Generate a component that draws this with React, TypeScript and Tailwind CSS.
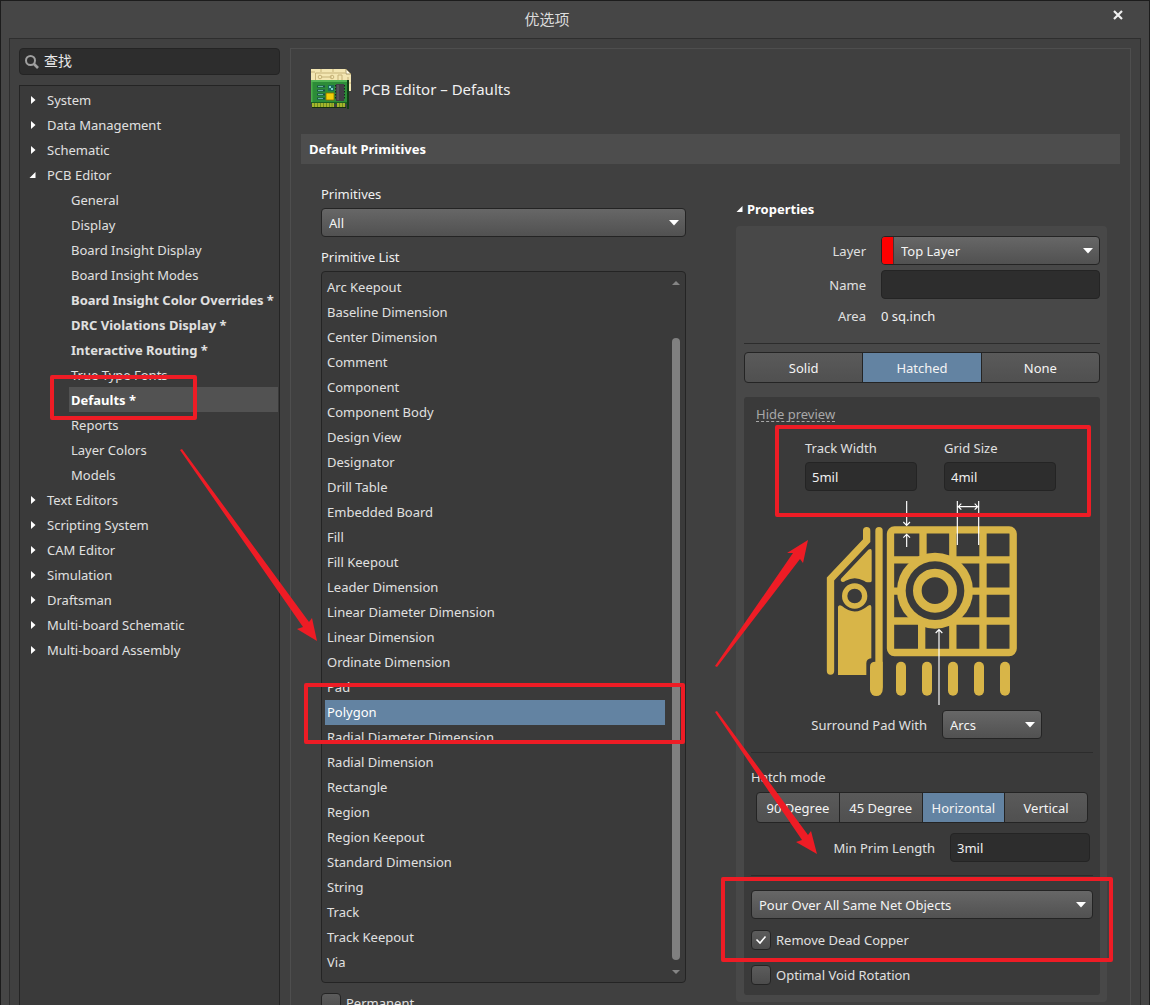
import React from "react";

const TREE = [
  { label: "System" },
  { label: "Data Management" },
  { label: "Schematic" },
  {
    label: "PCB Editor",
    children: [
      { label: "General" },
      { label: "Display" },
      { label: "Board Insight Display" },
      { label: "Board Insight Modes" },
      { label: "Board Insight Color Overrides *", bold: true },
      { label: "DRC Violations Display *", bold: true },
      { label: "Interactive Routing *", bold: true },
      { label: "True Type Fonts" },
      { label: "Defaults *", bold: true, selected: true },
      { label: "Reports" },
      { label: "Layer Colors" },
      { label: "Models" },
    ] as { label: string; bold?: boolean; selected?: boolean }[],
  },
  { label: "Text Editors" },
  { label: "Scripting System" },
  { label: "CAM Editor" },
  { label: "Simulation" },
  { label: "Draftsman" },
  { label: "Multi-board Schematic" },
  { label: "Multi-board Assembly" },
];

const PRIMITIVES = [
  "Arc Keepout",
  "Baseline Dimension",
  "Center Dimension",
  "Comment",
  "Component",
  "Component Body",
  "Design View",
  "Designator",
  "Drill Table",
  "Embedded Board",
  "Fill",
  "Fill Keepout",
  "Leader Dimension",
  "Linear Diameter Dimension",
  "Linear Dimension",
  "Ordinate Dimension",
  "Pad",
  "Polygon",
  "Radial Diameter Dimension",
  "Radial Dimension",
  "Rectangle",
  "Region",
  "Region Keepout",
  "Standard Dimension",
  "String",
  "Track",
  "Track Keepout",
  "Via",
];

const INPUT =
  "h-[29px] w-full min-w-0 rounded-[4px] border border-[#242424] bg-[#2d2d2d] px-1.5 text-[#f0f0f0] outline-none";

function Caret({ open = false }: { open?: boolean }) {
  return open ? (
    <svg className="h-2 w-2 shrink-0" viewBox="0 0 8 8" fill="#fff" aria-hidden="true">
      <path d="M6.500 1V7H0.500z" />
    </svg>
  ) : (
    <svg className="h-2 w-2 shrink-0" viewBox="0 0 8 8" fill="#fff" aria-hidden="true">
      <path d="M2 0V8L6.500 4z" />
    </svg>
  );
}

function Select({
  id,
  label,
  options,
  swatch = false,
}: {
  id: string;
  label?: string;
  options: string[];
  swatch?: boolean;
}) {
  return (
    <div className="relative flex h-[29px] w-full overflow-hidden rounded-[4px] border border-[#242424] bg-linear-to-b from-[#676767] to-[#515151]">
      {swatch && <span className="w-3 shrink-0 border-r border-[#4a3030] bg-[#ff0000]" />}
      <select
        id={id}
        aria-label={label}
        className="h-full w-full appearance-none bg-transparent pl-[7px] pr-6 text-[#f4f4f4] outline-none"
      >
        {options.map((o) => (
          <option key={o}>{o}</option>
        ))}
      </select>
      <svg
        className="pointer-events-none absolute right-1.5 top-[11px] h-[6px] w-[10px]"
        viewBox="0 0 10 6"
        fill="#fff"
        aria-hidden="true"
      >
        <path d="M0 0H10L5 5.5z" />
      </svg>
    </div>
  );
}

function Segments({ items, active }: { items: string[]; active: string }) {
  return (
    <div className="flex h-[31px] overflow-hidden rounded-[4px] border border-[#242424] bg-linear-to-b from-[#5a5a5a] to-[#505050]">
      {items.map((t) => (
        <button
          key={t}
          type="button"
          aria-pressed={t === active}
          className={
            t === active
              ? "min-w-0 flex-1 whitespace-nowrap border-r border-[#242424] bg-[#6383a2] text-[#f4f4f4] last:border-r-0"
              : "min-w-0 flex-1 whitespace-nowrap border-r border-[#242424] text-[#f4f4f4] last:border-r-0"
          }
        >
          {t}
        </button>
      ))}
    </div>
  );
}

function Check({ label, checked = false }: { label: string; checked?: boolean }) {
  return (
    <label className="flex h-5 items-center gap-[5px] text-[#e0e0e0]">
      <span className="relative h-5 w-5 shrink-0">
        <input
          type="checkbox"
          defaultChecked={checked}
          className="peer block h-5 w-5 appearance-none rounded-[4px] border border-[#242424] bg-linear-to-b from-[#5c5c5c] to-[#4c4c4c]"
        />
        <svg
          className="pointer-events-none absolute left-1 top-1 hidden h-3 w-3 peer-checked:block"
          viewBox="0 0 12 12"
          fill="none"
          stroke="#fff"
          strokeWidth="1.6"
          aria-hidden="true"
        >
          <path d="M1.5 5.5L5 9L10.500 2.500" />
        </svg>
      </span>
      {label}
    </label>
  );
}

function BoardIcon() {
  return (
    <svg className="h-10 w-10 shrink-0" viewBox="0 0 40 40" aria-hidden="true">
      <path d="M0 0H35L40 5V22H0z" fill="#f3e6b2" />
      <path d="M35 0V5H40z" fill="#fffbe6" stroke="#8a7a48" strokeWidth="0.7" />
      <g fill="none" stroke="#c5b278" strokeWidth="1">
        <path d="M4.500 12V4H34M0 3H4M10 0V3M22 0V3M10 8H21M37 8V22M37 14H40" />
        <circle cx="9" cy="8" r="1.800" />
        <circle cx="21" cy="8" r="1.800" />
        <path d="M27 11V6H31V11" />
      </g>
      <path d="M0 11H37V34H0z" fill="#2c8c38" />
      <path d="M0 11H37V13H0z" fill="#55b556" />
      <path d="M0 13H1.500V34H0z" fill="#4caf4a" />
      <path d="M36 11H38V40H36z" fill="#123d17" />
      <path d="M0 33H36V35H0z" fill="#1b5f23" />
      <path d="M1 34H23V39H1zM26 34H34V39H26z" fill="#a4b52c" />
      <path
        d="M3.500 34V39M6.500 34V39M9.500 34V39M12.500 34V39M15.500 34V39M18.500 34V39M21 34V39M28.500 34V39M31.500 34V39"
        stroke="#6f8a20"
      />
      <path d="M1 38.500H35" stroke="#15300f" />
      <path d="M6 17.500H14M6 21.500H14M6 25.500H14M6 29.500H14" stroke="#1a5148" strokeWidth="2" />
      <path d="M7 17.500H12M7 21.500H12M7 25.500H12M7 29.500H12" stroke="#6cbcab" strokeWidth="0.900" />
      <path d="M17 16H23V22H17z" fill="#1c6a58" />
      <path d="M18 17H20V19H18zM20 19H22V21H20z" fill="#7ad4c8" />
      <path d="M15 24H23V31H15z" fill="#f2cf08" stroke="#8d6d00" strokeWidth="0.800" />
      <path d="M25 15H33V32H25z" fill="#413e46" />
      <path d="M24.500 16V31M33.500 16V31" stroke="#1c1c20" strokeDasharray="1.500 1.500" />
      <path d="M26 16H28V31H26z" fill="#55525c" />
    </svg>
  );
}

function HatchPreview() {
  return (
    <svg
      className="mx-auto block h-[206px] w-[195px]"
      viewBox="75 30 585 618"
      role="img"
      aria-label="Hatched polygon preview"
    >
      <g fill="none" stroke="#d8b548" strokeWidth="22" strokeLinecap="round" strokeLinejoin="miter">
        <path d="M200 122V152L91.500 267V543" />
        <path d="M237 122V590" />
        <rect x="271.500" y="119.500" width="368" height="368" rx="12" />
        <path
          strokeLinecap="butt"
          d="M369 119V230M458.500 119V488M549 119V488M365 380V488M271 209.500H640M271 303.500H640M271 393H640"
        />
      </g>
      <circle cx="405" cy="302" r="114" fill="#d8b548" />
      <circle cx="405" cy="302" r="88" fill="#3a3a3a" />
      <circle cx="405" cy="302" r="53" fill="none" stroke="#d8b548" strokeWidth="26" />
      <circle cx="164" cy="318" r="30" fill="none" stroke="#d8b548" strokeWidth="16" />
      <g fill="#d8b548">
        <path d="M205 179Q215 174 215 182V272Q215 277 209 277H203Q198 277 192 272Q164 257 137 272Q128 279 123 273Q120 269 127 262z" />
        <path d="M114 350Q117 342 126 348Q164 381 204 347Q214 342 214 351V505Q199 507 199 520V555H114z" />
        <path d="M210 530Q210 515 226 515H248V599A19 19 0 0 1 210 599z" />
        <rect x="288" y="515" width="30" height="102" rx="15" />
        <rect x="366" y="515" width="30" height="102" rx="15" />
        <rect x="444" y="515" width="30" height="102" rx="15" />
        <rect x="522" y="515" width="30" height="102" rx="15" />
        <rect x="600" y="515" width="30" height="102" rx="15" />
      </g>
      <g fill="none" stroke="#fff" strokeWidth="3.500">
        <path d="M320 33V106M310 96L320 106L330 96" />
        <path d="M320 171V133M310 143L320 133L330 143" />
        <path d="M472 33V165M536 33V165M475 50H533M484 41L475 50L484 59M524 41L533 50L524 59" />
        <path d="M417 645V419M407 429L417 419L427 429" />
      </g>
    </svg>
  );
}

function Annotations() {
  return (
    <svg
      className="pointer-events-none absolute -left-px -top-px h-[1005px] w-[1150px]"
      viewBox="0 0 1150 1005"
      aria-hidden="true"
    >
      <g fill="none" stroke="#ee1c25" strokeWidth="4" strokeLinejoin="round">
        <rect x="52" y="377" width="143" height="41" />
        <rect x="306" y="685" width="377" height="57" />
        <rect x="777" y="427" width="312" height="88" />
        <rect x="723" y="879" width="388" height="81" />
      </g>
      <g fill="#ee1c25">
        <path d="M180 450L182 449L309 622L312 618L317 641L297 629L303 627z" />
        <path d="M715 666L717 667L800 559L803 563L808 540L787 553L793 553z" />
        <path d="M715 712L717 711L808 835L811 831L817 854L796 842L802 840z" />
      </g>
    </svg>
  );
}

export default function App() {
  return (
    <div className="relative flex h-screen flex-col overflow-hidden border border-b-0 border-[#1c1c1c] bg-[#464646] px-2 font-['Noto_Sans','Noto_Sans_CJK_SC',sans-serif] text-[13px] leading-5 text-[#e0e0e0]">
      <header className="relative flex h-[37px] shrink-0 items-center justify-center pb-0.5 pr-14">
        <h1 className="text-[15px] text-[#dcdcdc]">优选项</h1>
        <button type="button" aria-label="Close" className="absolute right-[15px] top-1.5 p-0.5">
          <svg className="h-3 w-3" viewBox="0 0 12 12" stroke="#f0f0f0" strokeWidth="2.200" aria-hidden="true">
            <path d="M2 2L10 10M10 2L2 10" />
          </svg>
        </button>
      </header>

      <div className="flex min-h-0 flex-1 gap-2.5 overflow-hidden border border-b-0 border-[#2e2e2e] bg-[#404040] px-[9px] pt-[9px]">
        <aside className="flex w-[261px] shrink-0 flex-col gap-2.5">
          <label className="flex h-[27px] shrink-0 items-center gap-[5px] rounded-[4px] border border-[#242424] bg-[#2d2d2d] px-[5px]">
            <svg className="h-[14px] w-[14px] shrink-0" viewBox="0 0 14 14" fill="none" stroke="#a0a0a0" strokeWidth="2" aria-hidden="true">
              <circle cx="5.500" cy="5.500" r="4.500" />
              <path d="M9 9L13 13" strokeWidth="2.600" />
            </svg>
            <input
              aria-label="查找"
              placeholder="查找"
              className="w-full min-w-0 bg-transparent pb-0.5 text-[14px] text-[#e8e8e8] outline-none placeholder:text-[#e8e8e8]"
            />
          </label>

          <nav className="min-h-0 flex-1 overflow-hidden border border-b-0 border-[#242424] bg-[#3a3a3a] pr-px pt-px">
            <ul>
              {TREE.map((node) => (
                <li key={node.label}>
                  <button type="button" aria-expanded={!!node.children} className="flex h-[25px] w-full items-center gap-[10px] pl-[9px] text-left">
                    <Caret open={!!node.children} />
                    {node.label}
                  </button>
                  {node.children && (
                    <ul className="pl-[49px]">
                      {node.children.map((c) => (
                        <li key={c.label}>
                          <button
                            type="button"
                            className={
                              c.selected
                                ? "block h-[25px] w-full overflow-hidden whitespace-nowrap bg-[#525252] pl-0.5 text-left font-bold text-white"
                                : c.bold
                                  ? "block h-[25px] w-full overflow-hidden whitespace-nowrap pl-0.5 text-left font-bold"
                                  : "block h-[25px] w-full overflow-hidden whitespace-nowrap pl-0.5 text-left"
                            }
                          >
                            {c.label}
                          </button>
                        </li>
                      ))}
                    </ul>
                  )}
                </li>
              ))}
            </ul>
          </nav>
        </aside>

        <main className="min-w-0 flex-1 overflow-hidden border border-b-0 border-[#4e4e4e] px-2.5 pt-5">
          <div className="flex items-center gap-[11px] pl-2.5">
            <BoardIcon />
            <h2 className="text-[15px] text-[#f0f0f0]">PCB Editor – Defaults</h2>
          </div>

          <h3 className="mt-[25px] flex h-[30px] items-center bg-[#4d4d4d] px-2 font-bold text-white">Default Primitives</h3>

          <div className="grid grid-cols-[365fr_371fr] items-start gap-[50px] pl-5 pr-[13px]">
            <section className="flex min-w-0 flex-col pt-5">
              <label htmlFor="primitives" className="mb-1 text-[#f0f0f0]">
                Primitives
              </label>
              <Select id="primitives" options={["All"]} />
              <h4 className="mb-1 mt-2.5 text-[#f0f0f0]">Primitive List</h4>
              <div className="flex rounded-[4px] border border-[#242424] bg-[#3a3a3a] py-[3px] pl-[3px] pr-[5px]">
                <ul role="listbox" aria-label="Primitive List" className="min-w-0 flex-1 pb-1 pr-[7px]">
                  {PRIMITIVES.map((p) => (
                    <li
                      key={p}
                      role="option"
                      aria-selected={p === "Polygon"}
                      className={
                        p === "Polygon"
                          ? "flex h-[25px] items-center bg-[#6383a2] px-0.5 pb-0.5 text-white"
                          : "flex h-[25px] items-center px-0.5 pb-0.5"
                      }
                    >
                      {p}
                    </li>
                  ))}
                </ul>
                <div className="flex w-2 flex-col items-center pb-[5px] pt-1.5" aria-hidden="true">
                  <svg className="h-1 w-2 shrink-0" viewBox="0 0 8 4" fill="#858585">
                    <path d="M0 4H8L4 0z" />
                  </svg>
                  <span className="mb-2.5 mt-[53px] w-2 flex-1 rounded-full bg-[#808080]" />
                  <svg className="h-1 w-2 shrink-0" viewBox="0 0 8 4" fill="#858585">
                    <path d="M0 0H8L4 4z" />
                  </svg>
                </div>
              </div>
              <div className="mt-2.5">
                <Check label="Permanent" />
              </div>
            </section>

            <section className="min-w-0 pt-[35px]">
              <h4 className="mb-[7px] flex items-center gap-[3px] font-bold text-white">
                <Caret open />
                Properties
              </h4>
              <div className="rounded-[4px] bg-[#484848] pb-[7px] pl-2 pr-[7px] pt-2.5">
                <div className="grid grid-cols-[122px_1fr] items-center gap-x-[15px] gap-y-[5px]">
                  <label htmlFor="layer" className="text-right">
                    Layer
                  </label>
                  <Select id="layer" options={["Top Layer"]} swatch />
                  <label htmlFor="name" className="text-right">
                    Name
                  </label>
                  <input id="name" className={INPUT} />
                  <span className="py-0.5 text-right">Area</span>
                  <span className="text-[#f0f0f0]">0 sq.inch</span>
                </div>
                <hr className="mb-2 mt-[15px] border-[#2c2c2c]" />
                <Segments items={["Solid", "Hatched", "None"]} active="Hatched" />

                <div className="mt-3.5 rounded-[3px] bg-[#3a3a3a] px-[7px] pb-2.5 pt-[7px]">
                  <div className="px-[5px]">
                    <a href="#preview" className="inline-block h-[18px] border-b border-dashed border-[#a8a8a8] text-[#a8a8a8]">
                      Hide preview
                    </a>
                  </div>
                  <div className="ml-[54px] mt-3.5 grid w-[251px] grid-cols-2 gap-x-[27px]">
                    <div>
                      <label htmlFor="track" className="mb-1 block">
                        Track Width
                      </label>
                      <input id="track" defaultValue="5mil" className={INPUT} />
                    </div>
                    <div>
                      <label htmlFor="grid" className="mb-1 block">
                        Grid Size
                      </label>
                      <input id="grid" defaultValue="4mil" className={INPUT} />
                    </div>
                  </div>
                  <div className="mt-[9px] pl-px">
                    <HatchPreview />
                  </div>
                  <div className="mt-1 flex items-center justify-end gap-[15px] pr-[51px]">
                    <label htmlFor="surround">Surround Pad With</label>
                    <div className="w-[100px]">
                      <Select id="surround" options={["Arcs"]} />
                    </div>
                  </div>
                  <hr className="mb-3.5 mt-[13px] border-[#2c2c2c]" />
                  <h5>Hatch mode</h5>
                  <div className="mt-[5px] px-[5px]">
                    <Segments items={["90 Degree", "45 Degree", "Horizontal", "Vertical"]} active="Horizontal" />
                  </div>
                  <div className="mt-2.5 flex items-center justify-end gap-[15px] pr-[3px]">
                    <label htmlFor="minprim">Min Prim Length</label>
                    <div className="w-[140px]">
                      <input id="minprim" defaultValue="3mil" className={INPUT} />
                    </div>
                  </div>
                  <hr className="mb-3.5 mt-[13px] border-[#2c2c2c]" />
                  <Select id="pour" label="Pour mode" options={["Pour Over All Same Net Objects"]} />
                  <div className="mt-[11px] flex flex-col gap-[15px]">
                    <Check label="Remove Dead Copper" checked />
                    <Check label="Optimal Void Rotation" />
                  </div>
                </div>
              </div>
            </section>
          </div>
        </main>
      </div>

      <Annotations />
    </div>
  );
}
